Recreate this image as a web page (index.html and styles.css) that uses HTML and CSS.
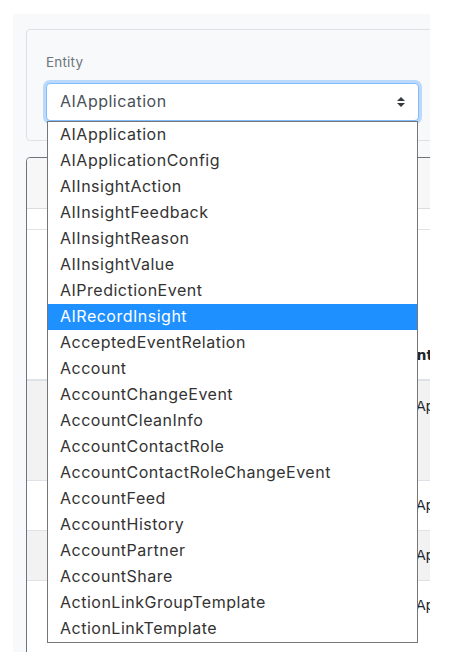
FILE: index.html
```html
<!DOCTYPE html>
<html>
<head>
<meta charset="utf-8">
<link rel="stylesheet" href="styles.css">
</head>
<body>
<div class="page">
  <div class="panel">
    <div class="card card-filter">
      <label class="label">Entity</label>
      <div class="select">
        <span>AIApplication</span>
        <svg class="arrows" width="8" height="10" viewBox="0 0 8 10"><polygon points="0,4 4,0 8,4" fill="#343a40"/><polygon points="0,6 4,10 8,6" fill="#343a40"/></svg>
      </div>
    </div>
    <div class="card card-results">
      <div class="card-header"></div>
      <div class="tabs"></div>
      <table class="table">
        <thead>
          <tr><th class="c1"></th><th class="c2">Entity</th></tr>
        </thead>
        <tbody>
          <tr class="tall"><td class="c1"></td><td class="c2">Ap</td></tr>
          <tr><td class="c1"></td><td class="c2">Ap</td></tr>
          <tr><td class="c1"></td><td class="c2">Ap</td></tr>
          <tr><td class="c1"></td><td class="c2">Ap</td></tr>
        </tbody>
      </table>
    </div>
  </div>
  <ul class="dropdown">
    <li>AIApplication</li>
    <li>AIApplicationConfig</li>
    <li>AIInsightAction</li>
    <li>AIInsightFeedback</li>
    <li>AIInsightReason</li>
    <li>AIInsightValue</li>
    <li>AIPredictionEvent</li>
    <li class="active">AIRecordInsight</li>
    <li>AcceptedEventRelation</li>
    <li>Account</li>
    <li>AccountChangeEvent</li>
    <li>AccountCleanInfo</li>
    <li>AccountContactRole</li>
    <li>AccountContactRoleChangeEvent</li>
    <li>AccountFeed</li>
    <li>AccountHistory</li>
    <li>AccountPartner</li>
    <li>AccountShare</li>
    <li>ActionLinkGroupTemplate</li>
    <li>ActionLinkTemplate</li>
  </ul>
</div>
</body>
</html>
```
FILE: styles.css
```css
* { box-sizing: border-box; }
html, body { margin: 0; padding: 0; background: #fff; }
body { font-family: Inter, "Open Sans", sans-serif; }

.page { position: relative; width: 450px; height: 660px; overflow: hidden; }

.panel {
  margin: 14px 0 0 13px;
  width: 417px;
  height: 638px;
  background: #f8f9fa;
  padding: 15px 0 0 13px;
  overflow: hidden;
}

.card {
  width: 413px;
  border-radius: 4px;
}

.card-filter {
  border: 1px solid #dfe2e5;
  background: #f8f9fa;
  padding: 22px 19px 19px 19px;
}

.label {
  display: block;
  font-size: 13.5px;
  line-height: 21px;
  letter-spacing: 0.2px;
  color: #6c757d;
  margin-bottom: 10px;
}

.select {
  width: 373px;
  height: 38px;
  border: 1px solid #80bdff;
  border-radius: 4px;
  background: #fff;
  box-shadow: 0 0 0 3px rgba(0, 123, 255, 0.25);
  padding: 0 13px;
  display: flex;
  align-items: center;
  justify-content: space-between;
  font-size: 16px;
  letter-spacing: 0.5px;
  color: #495057;
}

.select span { padding-bottom: 2px; }

.arrows { display: block; }

.card-results {
  margin-top: 16px;
  border: 1px solid #6c757d;
  background: #fff;
  height: 520px;
  overflow: hidden;
}

.card-header {
  height: 51px;
  background: #f7f7f7;
  border-bottom: 1px solid #dcdcdc;
  border-radius: 3px 3px 0 0;
}

.tabs {
  height: 21px;
  border-bottom: 1px solid #e3e3e3;
}

.table {
  margin-top: 100px;
  width: 600px;
  table-layout: fixed;
  border-collapse: collapse;
  font-family: "DejaVu Sans", sans-serif;
  font-size: 14px;
  color: #212529;
}

.table th {
  height: 50px;
  text-align: left;
  font-weight: bold;
  border-bottom: 2px solid #dee2e6;
  vertical-align: middle;
  padding: 0 0 0 0;
  white-space: nowrap;
}

.table th.c2 { padding-left: 3px; }

.table td {
  height: 50px;
  border-top: 1px solid #dee2e6;
  vertical-align: top;
  padding: 16px 0 0 12px;
  white-space: nowrap;
}

.table .c1 { width: 377px; padding: 0; }

.table tbody tr:nth-child(odd) { background: #f2f2f2; }
.table tbody tr.tall td { height: 100px; padding-top: 17px; }
.table tbody tr td.c1 { padding: 0; }

.dropdown {
  position: absolute;
  left: 47px;
  top: 121px;
  width: 371px;
  margin: 0;
  padding: 0;
  list-style: none;
  background: #fff;
  border: 1px solid #767676;
  font-size: 16px;
  letter-spacing: 0.5px;
  color: #333;
}

.dropdown li {
  height: 26px;
  line-height: 24px;
  padding-left: 12px;
  white-space: nowrap;
}

.dropdown li.active {
  background: #1e90ff;
  color: #fff;
}
```
